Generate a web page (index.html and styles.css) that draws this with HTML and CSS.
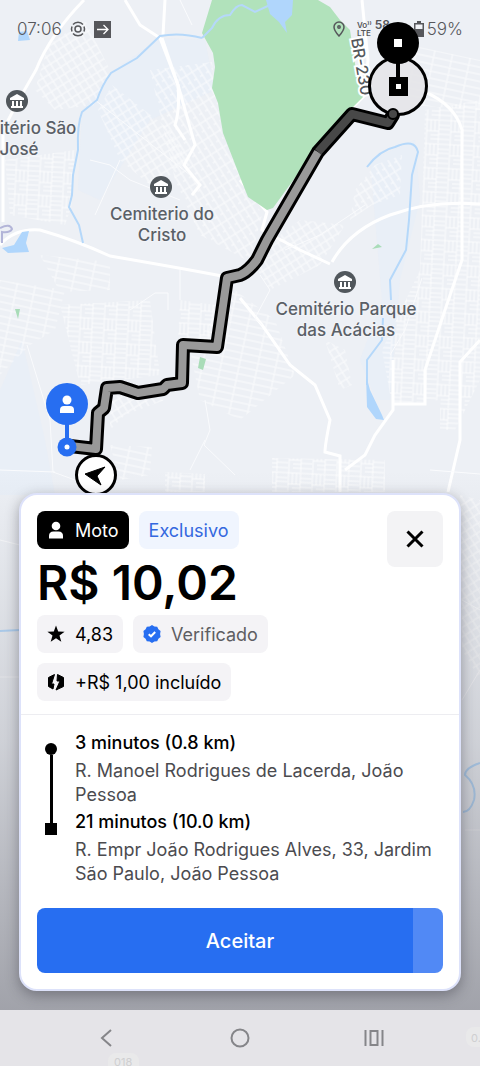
FILE: index.html
```html
<!DOCTYPE html>
<html lang="pt-BR">
<head>
<meta charset="UTF-8">
<meta name="viewport" content="width=device-width, initial-scale=1.0">
<title>Nova viagem</title>
<link rel="stylesheet" href="styles.css">
</head>
<body>

<main class="screen">
    <svg class="map" viewBox="0 0 480 1066" preserveAspectRatio="xMidYMin slice" aria-hidden="true">
        <defs>
            <pattern id="streetsA" width="16" height="7" patternUnits="userSpaceOnUse" patternTransform="rotate(58)">
                <path d="M0 1H16M3 1V7M11 1V4" class="street"/>
            </pattern>
            <pattern id="streetsB" width="18" height="7" patternUnits="userSpaceOnUse" patternTransform="rotate(12)">
                <path d="M0 1H18M4 1V7" class="street"/>
            </pattern>
            <pattern id="streetsC" width="24" height="24" patternUnits="userSpaceOnUse" patternTransform="rotate(3)">
                <path d="M0 1H24M1 0V24M5 1V12M9 1V12M13 1V24M1 12H13M13 6H24M13 10H24M13 15H24M13 20H24M5 16H13M5 20H13" class="street"/>
            </pattern>
            <pattern id="streetsD" width="14" height="8" patternUnits="userSpaceOnUse" patternTransform="rotate(-32)">
                <path d="M0 1H14M2 1V8M9 1V8" class="street"/>
            </pattern>
            <linearGradient id="shade" x1="0" y1="0" x2="0" y2="1">
                <stop offset="0" stop-color="#55555f" stop-opacity="0"/>
                <stop offset="0.5" stop-color="#55555f" stop-opacity="0.2"/>
                <stop offset="1" stop-color="#55555f" stop-opacity="0.5"/>
            </linearGradient>
        </defs>

        <rect width="480" height="1066" class="land"/>
        <path d="M110 73L160 38L205 40L215 90L150 120L100 200L78 190L82 110Z" class="wet"/>
        <path d="M370 160L415 140L420 200L400 280L390 400L376 400L360 360L382 300Z" class="wet"/>
        <path d="M0 390L22 340L45 440L55 495L0 495Z" class="wet"/>

        <!-- blocks of small streets -->
        <path d="M48 45L85 20L110 70L95 105L55 110L35 90Z" fill="url(#streetsD)"/>
        <path d="M5 160L75 150L72 205L65 225L10 215Z" fill="url(#streetsC)"/>
        <path d="M98 110L112 85L170 130L190 165L150 185L120 160Z" fill="url(#streetsD)"/>
        <path d="M150 70L212 62L222 135L262 215L250 262L200 235L175 180Z" fill="url(#streetsA)"/>
        <path d="M0 280L65 290L55 330L30 345L0 375Z" fill="url(#streetsB)"/>
        <path d="M40 255L110 262L110 290L60 292Z" fill="url(#streetsB)"/>
        <path d="M60 305L150 300L160 375L80 385Z" fill="url(#streetsC)"/>
        <path d="M180 300L215 305L210 345L178 338Z" fill="url(#streetsC)"/>
        <path d="M190 350L235 290L275 320L295 375L240 420L200 400Z" fill="url(#streetsB)"/>
        <path d="M110 395L165 400L125 415L110 430Z" fill="url(#streetsD)"/>
        <path d="M250 258L300 220L345 225L320 265L270 290Z" fill="url(#streetsD)"/>
        <path d="M375 165L402 155L400 195L372 205L350 220L355 190Z" fill="url(#streetsA)"/>
        <path d="M410 45L480 60L480 110L410 105Z" fill="url(#streetsB)"/>
        <path d="M425 110L480 100V380L455 430L440 430V400L392 405L382 350L420 270Z" fill="url(#streetsC)"/>
        <path d="M325 340L345 350L352 385L340 390Z" fill="url(#streetsD)"/>
        <path d="M272 458L385 460V492H272Z" fill="url(#streetsC)"/>
        <path d="M110 445L152 447L150 475L120 480Z" fill="url(#streetsB)"/>
        <path d="M165 472L205 474V492H165Z" fill="url(#streetsC)"/>
        <path d="M460 495L480 500V680L462 650Z" fill="url(#streetsD)"/>

        <!-- main roads -->
        <g class="roads">
            <path d="M84 0Q50 35 36 70Q18 100 3 130V222"/>
            <path d="M0 245Q15 228 40 230Q75 240 110 256Q180 268 222 276"/>
            <path d="M125 0L140 25L160 38L178 85L195 145L184 165L200 185L192 195"/>
            <path d="M165 0L163 35M162 38L178 85Q180 110 175 125L185 140"/>
            <path d="M240 180L267 212L262 230L300 250L330 264"/>
            <path d="M332 262Q350 230 390 215Q430 200 480 204"/>
            <path d="M350 110L365 95L368 60L362 0"/>
            <path d="M425 92Q455 105 462 130V260L445 310L425 370V404H392"/>
            <path d="M240 298L262 325L290 365L315 385L330 420Q325 445 325 452L340 456V492"/>
            <path d="M480 340L460 362V440L448 492"/>
            <path d="M393 360V410L375 435L365 455L345 470"/>
        </g>
        <g class="lanes">
            <path d="M180 0L192 25M95 100L190 175M90 160L110 165L130 180L180 200M95 215L120 160"/>
            <path d="M27 345L50 420L53 472L75 480M0 470L55 472M180 270V300M130 310L155 293H168V310"/>
            <path d="M205 400L210 430L204 445L235 475M430 470L480 474M205 440L190 470"/>
            <path d="M285 250L320 235L365 205M262 325L255 318L270 290L260 275M422 278L405 330L390 355"/>
            <path d="M462 600L480 610M462 700L480 670M0 540L20 545M0 677H20M465 830H480"/>
        </g>

        <path d="M212 0L202 33L213 53L215 67L212 88L218 103L223 133L240 177L248 197L267 210L273 208L313 153L350 110L363 97L357 77L350 30L340 20L330 7L318 0Z" class="park"/>
        <path d="M372 249L382 247L378 244ZM15 309L20 309L18 319ZM200 357L206 359L203 370L198 368Z" class="park park-small"/>

        <g class="river">
            <path d="M202 38Q180 32 160 36L137 58L111 73Q102 85 97 100L82 112Q77 125 78 150L73 175L72 195L69 207L79 225L83 243"/>
            <path d="M202 38L212 28Q218 15 230 15Q236 5 242 5L255 12L270 5L275 3"/>
            <path d="M367 167Q380 150 395 147Q415 138 418 152L412 175L409 220L406 250L390 280L391 300M383 318L382 340L367 360V385"/>
            <path d="M0 631L20 630M480 763Q465 768 465 775Q477 785 474 800Q470 812 463 812"/>
        </g>
        <path d="M266 0H293L292 15L285 22L287 33L279 22L270 14Z" class="water"/>
        <path d="M366 375L370 390L382 415L384 420L376 419L367 407Z" class="water"/>
        <path d="M2 248L14 245L22 232L29 231L26 243L29 252L8 253Z" class="water"/>
        <path d="M19 32L27 31L30 40L18 41Z" class="water"/>
        <path d="M0 228Q10 223 12 229Q10 233 2 232V243" class="trail"/>

        <!-- places -->
        <g class="place-icon">
            <g id="place">
                <circle cx="17" cy="101" r="11"/>
                <path d="M17 94L24 98V100H10V98ZM12 101H14V106H12ZM16 101H18V106H16ZM20 101H22V106H20ZM11 106H23V108H11Z"/>
            </g>
            <use href="#place" x="144" y="86"/>
            <use href="#place" x="328" y="181"/>
        </g>
        <g class="place-name">
            <text x="38" y="134">itério São</text>
            <text x="19" y="155">José</text>
            <text x="162" y="220">Cemiterio do</text>
            <text x="162" y="241">Cristo</text>
            <text x="346" y="315">Cemitério Parque</text>
            <text x="346" y="336">das Acácias</text>
        </g>
        <text class="road-name" transform="translate(351 39) rotate(80)">BR-230</text>

        <rect y="470" width="480" height="540" fill="url(#shade)"/>
    </svg>

    <header class="status">
        <time>07:06</time>
        <svg width="16" height="16" viewBox="0 0 16 16" class="line-icon">
            <circle cx="8" cy="8" r="3"/>
            <path d="M3 3.500A6.500 6.500 0 0 1 13 3.500M3 12.500A6.500 6.500 0 0 0 13 12.500M2 5.500A6.500 6.500 0 0 0 2 10.500M14 5.500A6.500 6.500 0 0 1 14 10.500"/>
        </svg>
        <svg width="17" height="17" viewBox="0 0 17 17">
            <rect width="17" height="17" fill="#56575b"/>
            <path d="M3 8.500H14M9.500 4L14 8.500L9.500 13" fill="none" stroke="#fff" stroke-width="1.300"/>
        </svg>
        <div class="status-right">
            <svg width="12" height="16" viewBox="0 0 12 16" class="line-icon">
                <path d="M6 15Q1 9.500 1 6A5 5 0 0 1 11 6Q11 9.500 6 15Z"/>
                <circle cx="6" cy="6" r="1.200"/>
            </svg>
            <span class="volte">Vo⁾⁾<br>LTE</span>
            <span class="speed">58</span>
            <svg width="10" height="16" viewBox="0 0 10 16">
                <path d="M3 0H7V2H10V16H0V2H3Z" fill="#56575b"/>
                <path d="M1.500 3.500H8.500V8H1.500Z" fill="#f2f4f8"/>
            </svg>
            <span>59%</span>
        </div>
    </header>

    <svg class="map route" viewBox="0 0 480 1066" preserveAspectRatio="xMidYMin slice" aria-hidden="true">
        <g class="route-line">
            <path class="casing" d="M393 115L388 123L352 114L318 152L267 240L257 260Q248 272 240 275L227 278L217 347L183 345L182 383L167 385L163 389L138 393L120 387L107 388L104 408L98 413L96 449L70 446"/>
            <path class="fill" d="M318 152L267 240L257 260Q248 272 240 275L227 278L217 347L183 345L182 383L167 385L163 389L138 393L120 387L107 388L104 408L98 413L96 449L70 446"/>
            <path class="fill-dark" d="M393 115L388 123L352 114L318 152"/>
        </g>

        <circle cx="398" cy="86" r="28.500" fill="#e4e4e7" fill-opacity="0.850" stroke="#000" stroke-width="3"/>
        <circle cx="393" cy="114" r="5" fill="#484848" stroke="#000" stroke-width="2"/>
        <path d="M398 50V80" stroke="#000" stroke-width="4"/>
        <circle cx="398" cy="43" r="21"/>
        <path d="M394 39H402V47H394Z" fill="#fff"/>
        <path d="M389 77H408V96H389Z"/>
        <path d="M396 84H401V89H396Z" fill="#fff"/>

        <circle cx="96" cy="475" r="19.500" fill="#fff" stroke="#000" stroke-width="3"/>
        <path d="M85 474L105 467L97 476L101 485Z" stroke="#000" stroke-linejoin="round"/>

        <g fill="#276ef1">
            <path d="M65 420H69V445H65Z"/>
            <circle cx="67" cy="404" r="21"/>
            <circle cx="67" cy="447" r="9.500"/>
        </g>
        <g fill="#fff">
            <circle cx="67" cy="447" r="2.500"/>
            <circle cx="67" cy="400" r="4.500"/>
            <path d="M60 413V410Q60 406 64 406H70Q74 406 74 410V413Z"/>
        </g>
    </svg>

    <section class="offer">
        <div class="offer-head">
            <div class="summary">
                <div class="chips">
                    <span class="chip chip-dark">
                        <svg width="18" height="18" viewBox="0 0 18 18" fill="currentColor">
                            <circle cx="9" cy="5" r="4.300"/>
                            <path d="M2 17.500V15Q2 10.500 6.500 10.500H11.500Q16 10.500 16 15V17.500Z"/>
                        </svg>
                        Moto
                    </span>
                    <span class="chip chip-blue">Exclusivo</span>
                </div>
                <h1>R$ 10,02</h1>
            </div>
            <button type="button" class="close" aria-label="Fechar">
                <svg width="18" height="18" viewBox="0 0 18 18">
                    <path d="M1.500 1.500L16.500 16.500M16.500 1.500L1.500 16.500" stroke="#000" stroke-width="3"/>
                </svg>
            </button>
        </div>

        <div class="chips">
            <span class="chip">
                <svg width="18" height="18" viewBox="0 0 18 18">
                    <path d="M9 0.500L11.200 6.500L17.600 6.700L12.500 10.600L14.300 16.800L9 13.200L3.700 16.800L5.500 10.600L0.400 6.700L6.800 6.500Z"/>
                </svg>
                4,83
            </span>
            <span class="chip chip-muted">
                <svg width="18" height="18" viewBox="0 0 18 18">
                    <path d="M9 0L11.400 1.600L14.200 1.700L15.400 4.300L17.600 6.100L17.100 9L17.600 11.900L15.400 13.700L14.200 16.300L11.400 16.400L9 18L6.600 16.400L3.800 16.300L2.600 13.700L0.400 11.900L0.900 9L0.400 6.100L2.600 4.300L3.800 1.700L6.600 1.600Z" fill="#276ef1"/>
                    <path d="M5.700 9.200L8 11.300L12.200 7" fill="none" stroke="#fff" stroke-width="2"/>
                </svg>
                Verificado
            </span>
            <span class="chip">
                <svg width="18" height="18" viewBox="0 0 18 18">
                    <path d="M7.500 1.500L1.500 4.500V13.500L6 16L7 11H4.500Z" stroke="#000" stroke-linejoin="round"/>
                    <path d="M10.500 1.500L16.500 4.500V13.500L9 17L13 8H10Z" stroke="#000" stroke-linejoin="round"/>
                </svg>
                +R$ 1,00 incluído
            </span>
        </div>

        <div class="trip">
            <div class="track"><i class="dot"></i><i class="bar"></i><i class="square"></i></div>
            <div class="stops">
                <h2>3 minutos (0.8 km)</h2>
                <p>R. Manoel Rodrigues de Lacerda, João Pessoa</p>
                <h2>21 minutos (10.0 km)</h2>
                <p>R. Empr João Rodrigues Alves, 33, Jardim São Paulo, João Pessoa</p>
            </div>
        </div>

        <button type="button" class="accept">Aceitar</button>
    </section>

    <nav class="system-nav">
        <svg class="nav-map" viewBox="0 0 480 56" preserveAspectRatio="xMidYMin slice" aria-hidden="true">
            <rect x="108" y="43" width="31" height="20" rx="8"/>
            <rect x="466" y="17" width="30" height="20" rx="8"/>
            <text x="114" y="56">018</text>
            <text x="471" y="32">0.</text>
        </svg>
        <button type="button" aria-label="Voltar">
            <svg width="20" height="20" viewBox="0 0 20 20"><path d="M15 2L6 10L15 18"/></svg>
        </button>
        <button type="button" aria-label="Início">
            <svg width="20" height="20" viewBox="0 0 20 20"><circle cx="10" cy="10" r="8.500"/></svg>
        </button>
        <button type="button" aria-label="Recentes">
            <svg width="20" height="20" viewBox="0 0 20 20"><path d="M1.500 2V18M18.500 2V18M6.500 3H13.500V17H6.500Z"/></svg>
        </button>
    </nav>
</main>

</body>
</html>
```
FILE: styles.css
```css
* {
    box-sizing: border-box;
}

body {
    margin: 0;
    font-family: Inter, "Noto Sans", sans-serif;
    color: #000;
}

.screen {
    position: relative;
    display: flex;
    flex-direction: column;
    min-height: 100vh;
    overflow: hidden;
}

/* map */
.map {
    position: absolute;
    top: 0;
    left: 0;
    width: 100%;
    height: 100%;
}

.land {
    fill: #edf0f5;
}

.wet {
    fill: #e5eef9;
    opacity: 0.5;
}

.street {
    fill: none;
    stroke: #fff;
    stroke-opacity: 0.8;
}

.roads {
    fill: none;
    stroke: #fff;
    stroke-width: 3px;
}

.lanes {
    fill: none;
    stroke: #fafbfd;
    stroke-width: 1px;
}

.park {
    fill: #b1e2bb;
}

.park-small {
    fill: #a9dcb8;
}

.river {
    fill: none;
    stroke: #b5d8fa;
    stroke-width: 2px;
}

.water {
    fill: #b0d6fc;
}

.trail {
    fill: none;
    stroke: #b3b5d8;
    stroke-width: 2px;
}

.place-icon circle {
    fill: #51575c;
}

.place-icon path {
    fill: #fff;
}

.place-name {
    fill: #5a6067;
    font-size: 17px;
    font-weight: 500;
    stroke: #f2f4f8;
    stroke-width: 2px;
    paint-order: stroke;
    text-anchor: middle;
}

.road-name {
    fill: #54585c;
    font-size: 16px;
    font-weight: 500;
    stroke: #fff;
    stroke-width: 4px;
    paint-order: stroke;
}

/* route */
.route-line path {
    fill: none;
    stroke-linejoin: round;
}

.route-line .casing {
    stroke: #000;
    stroke-width: 14px;
    stroke-linecap: round;
}

.route-line .fill {
    stroke: #999;
    stroke-width: 8px;
}

.route-line .fill-dark {
    stroke: #484848;
    stroke-width: 8px;
}

/* status bar */
.status {
    position: relative;
    display: flex;
    align-items: center;
    gap: 8px;
    height: 58px;
    padding: 0 17px;
    color: #56575b;
    font-size: 17px;
    font-weight: 300;
}

.status-right {
    display: flex;
    align-items: center;
    gap: 3px;
    margin-left: auto;
}

.line-icon {
    fill: none;
    stroke: #56575b;
    stroke-width: 1.5px;
}

.volte {
    margin-left: 9px;
    font-size: 8px;
    font-weight: 600;
    line-height: 8px;
}

.speed {
    width: 36px;
    padding-bottom: 8px;
    font-size: 12px;
    font-weight: 600;
    line-height: 12px;
}

/* offer card */
.offer {
    position: relative;
    margin: auto 19px 19px;
    padding: 16px;
    border: 2px solid #dde2fa;
    border-radius: 18px;
    background-color: #fff;
    box-shadow: 0 4px 14px rgba(40, 40, 50, 0.4);
}

.offer-head {
    display: flex;
    justify-content: space-between;
    align-items: flex-start;
    height: 104px;
}

.chips {
    display: flex;
    flex-wrap: wrap;
    gap: 10px;
}

.chip {
    display: flex;
    align-items: center;
    gap: 10px;
    height: 38px;
    padding: 0 10px;
    border-radius: 8px;
    background-color: #f4f3f6;
    font-size: 18px;
    font-weight: 400;
}

.chip-dark {
    background-color: #000;
    color: #fff;
}

.chip-blue {
    background-color: #f0f5fe;
    color: #3468df;
}

.chip-muted {
    color: #5e5e62;
}

h1 {
    margin: 0;
    font-size: 48px;
    font-weight: 600;
    line-height: 68px;
}

.close {
    width: 56px;
    height: 56px;
    padding: 0;
    border: 0;
    border-radius: 8px;
    background-color: #f3f3f5;
    cursor: pointer;
}

.close svg {
    display: block;
    margin: auto;
}

.trip {
    display: flex;
    gap: 18px;
    margin: 13px -16px 0;
    padding: 16px 24px 19px;
    border-top: 1px solid #ededf1;
}

.track {
    display: flex;
    flex-direction: column;
    align-items: center;
    width: 12px;
    padding: 12px 0 54px;
}

.dot {
    width: 12px;
    height: 12px;
    border-radius: 50%;
    background-color: #000;
}

.bar {
    flex: 1;
    width: 3px;
    background-color: #000;
}

.square {
    width: 12px;
    height: 12px;
    background-color: #000;
}

.stops {
    flex: 1;
}

h2 {
    margin: 0;
    font-size: 18px;
    font-weight: 500;
    line-height: 24px;
}

.stops p {
    margin: 4px 0 3px;
    color: #4b4b4f;
    font-size: 18px;
    font-weight: 400;
    line-height: 24px;
}

.accept {
    display: block;
    width: 100%;
    height: 65px;
    border: 0;
    border-radius: 8px;
    background: linear-gradient(90deg, #276ef1 92.5%, #5189f5 92.5%);
    color: #fff;
    font-family: inherit;
    font-size: 20px;
    font-weight: 500;
    cursor: pointer;
}

/* system navigation */
.system-nav {
    position: relative;
    display: flex;
    justify-content: center;
    gap: 78px;
    height: 56px;
    background-color: #e5e4e8;
}

.system-nav button {
    position: relative;
    width: 56px;
    padding: 0;
    border: 0;
    background: none;
}

.system-nav button svg {
    display: block;
    margin: auto;
    fill: none;
    stroke: #858589;
    stroke-width: 2px;
}

.nav-map {
    position: absolute;
    top: 0;
    left: 0;
    width: 100%;
    height: 100%;
    fill: #e9e9ea;
}

.nav-map text {
    fill: #cfcfd1;
    font-size: 11px;
}
```
